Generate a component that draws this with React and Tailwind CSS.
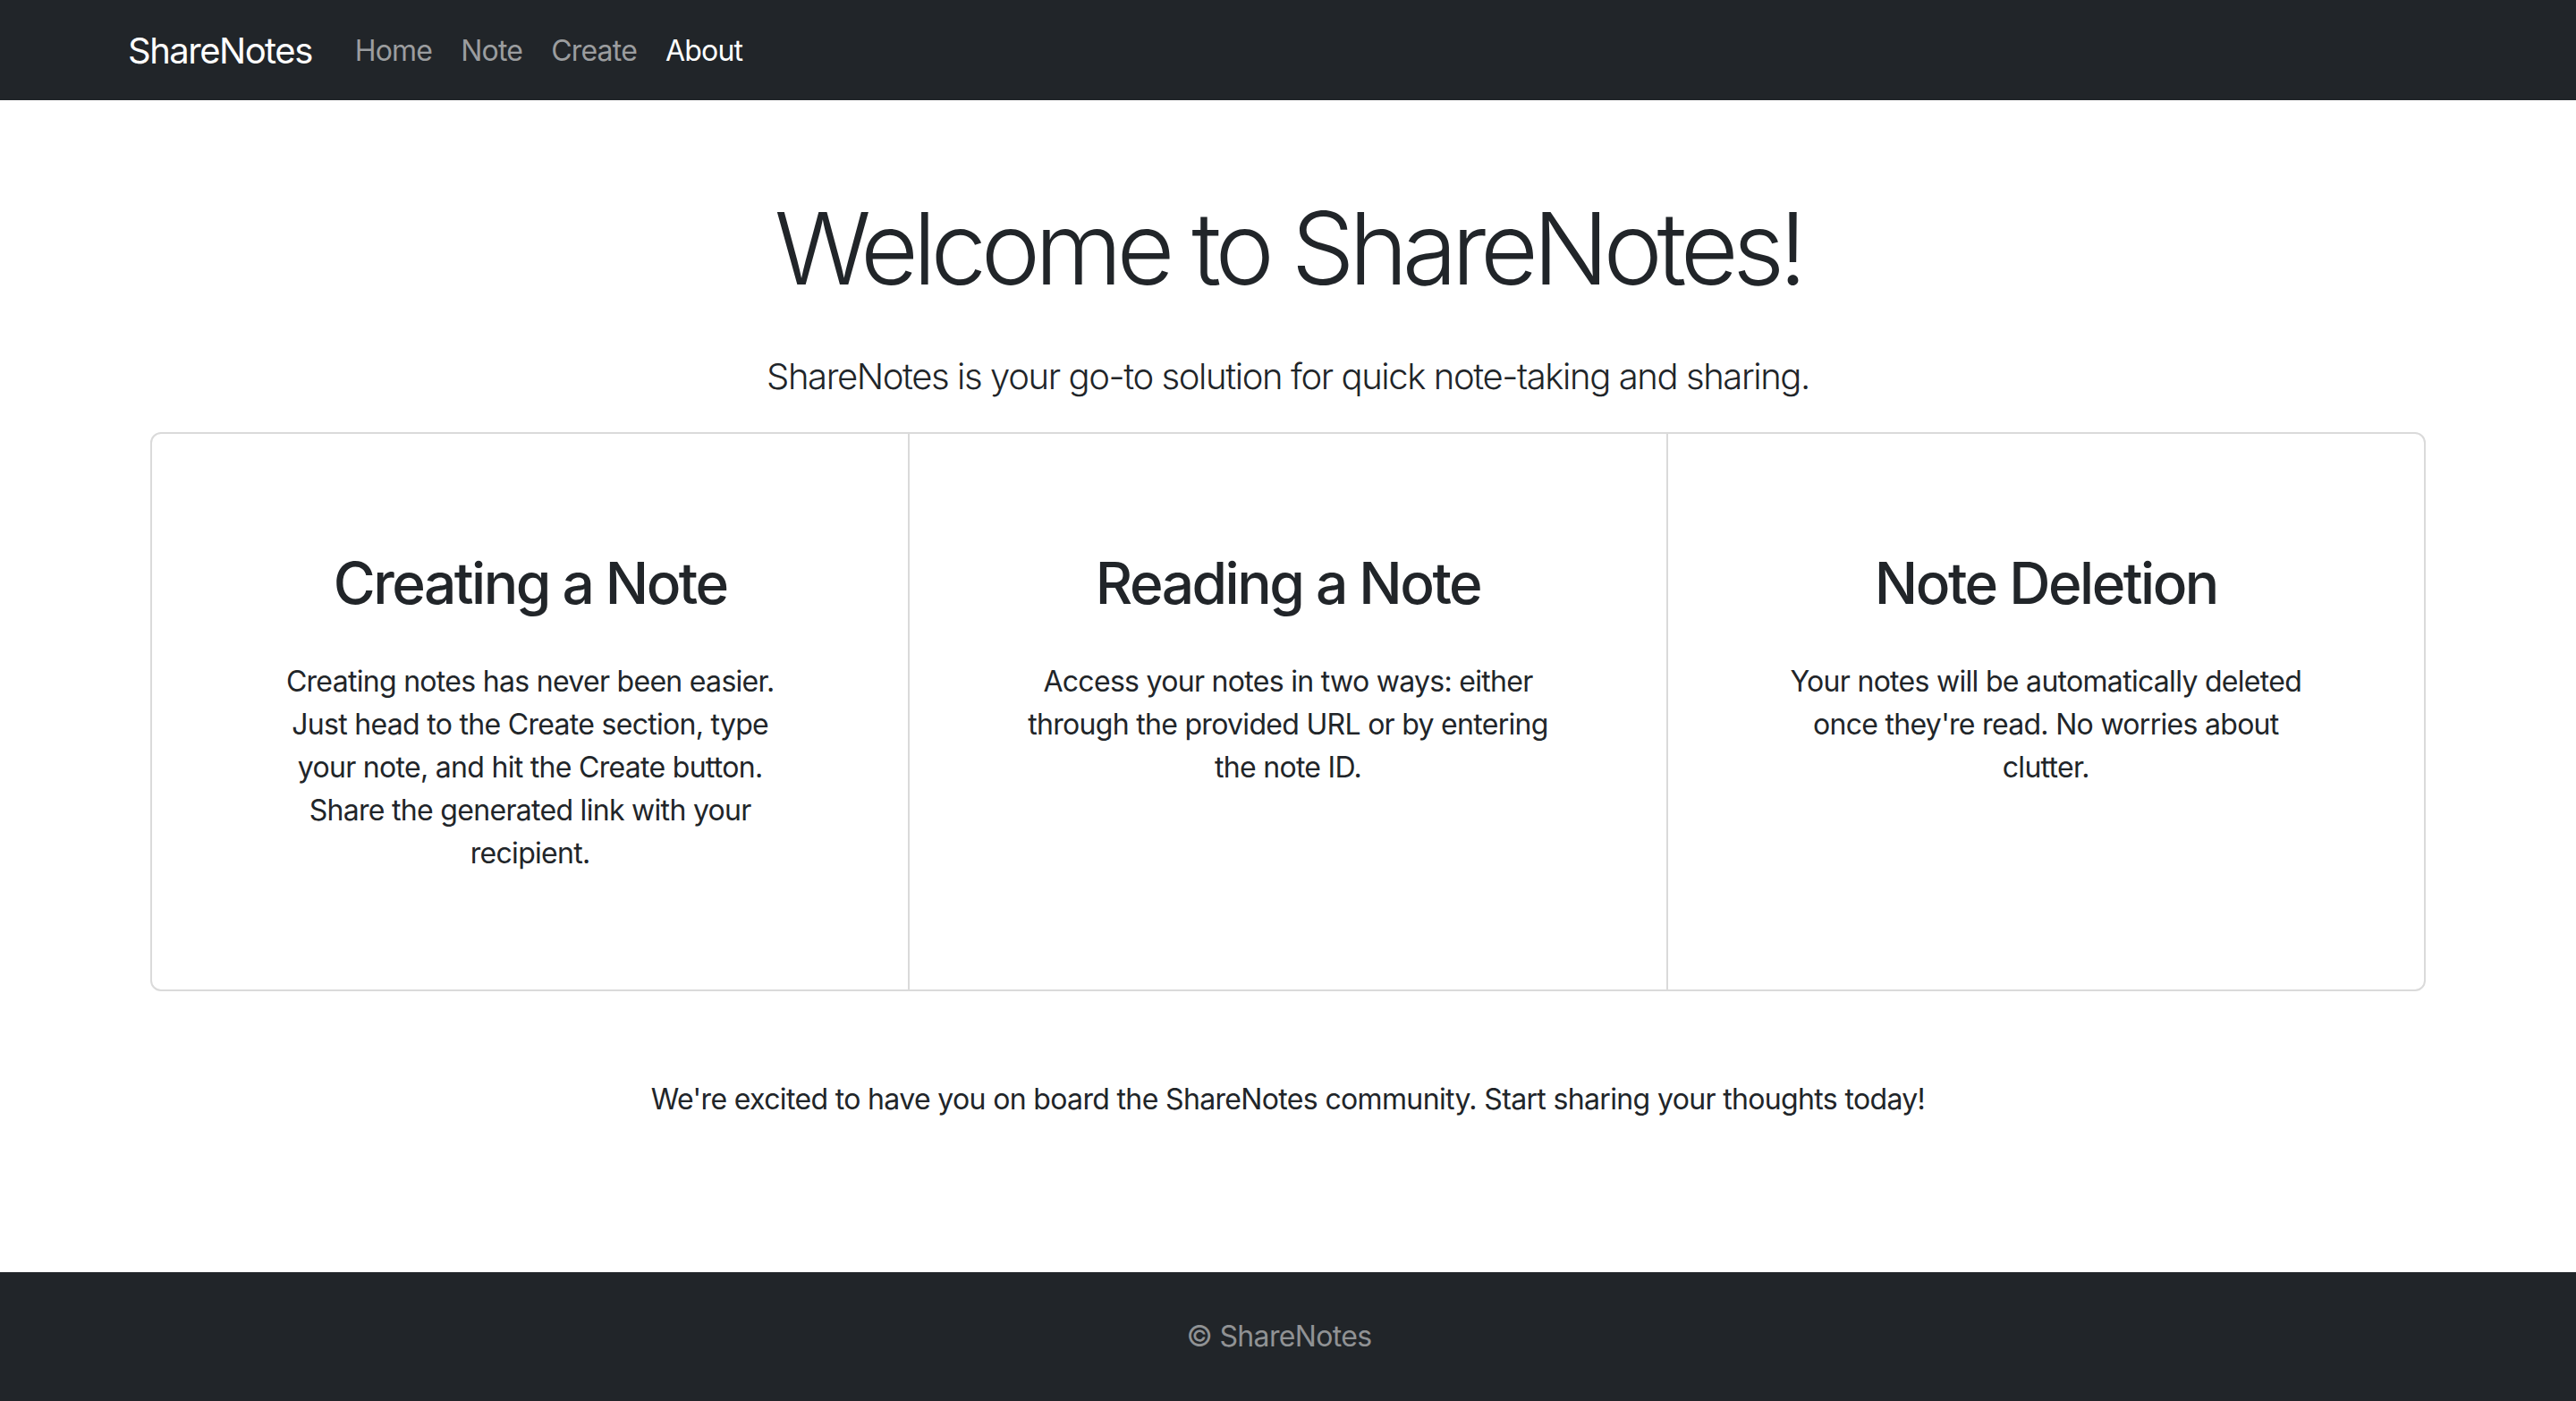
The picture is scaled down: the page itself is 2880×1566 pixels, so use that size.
import React from 'react';

const navLinks = [
  { label: 'Home', active: false },
  { label: 'Note', active: false },
  { label: 'Create', active: false },
  { label: 'About', active: true },
];

const cards = [
  {
    title: 'Creating a Note',
    lines: [
      'Creating notes has never been easier.',
      'Just head to the Create section, type',
      'your note, and hit the Create button.',
      'Share the generated link with your',
      'recipient.',
    ],
  },
  {
    title: 'Reading a Note',
    lines: [
      'Access your notes in two ways: either',
      'through the provided URL or by entering',
      'the note ID.',
    ],
  },
  {
    title: 'Note Deletion',
    lines: [
      'Your notes will be automatically deleted',
      "once they're read. No worries about",
      'clutter.',
    ],
  },
];

const Navbar = () => (
  <nav className="bg-[#212529] h-[112px] flex items-center">
    <div className="w-full px-[143px] flex items-center pt-[2px]">
      <a className="text-white text-[40px] leading-[60px] mr-[32px] tracking-[-1.5px]">ShareNotes</a>
      <div className="flex items-center">
        {navLinks.map((link) => (
          <a
            key={link.label}
            className={`text-[32px] leading-[48px] px-[16px] tracking-[-0.8px] ${link.active ? 'text-white' : 'text-[#9b9d9f]'}`}
          >
            {link.label}
          </a>
        ))}
      </div>
    </div>
  </nav>
);

const Card = ({ title, lines, last }) => (
  <div className={`flex-1 p-[128px] px-[64px] text-center ${last ? '' : 'border-r-2 border-[#dadada]'}`}>
    <h2 className="text-[64px] leading-[77px] font-medium mb-[48px] tracking-[-2.5px]">{title}</h2>
    <p className="text-[32px] leading-[48px] tracking-[-0.7px]">
      {lines.map((line, i) => (
        <React.Fragment key={i}>
          {line}
          {i < lines.length - 1 && <br />}
        </React.Fragment>
      ))}
    </p>
  </div>
);

export default function App() {
  return (
    <div
      className="min-h-screen flex flex-col bg-white text-[#212529]"
      style={{ fontFamily: 'Inter, "Noto Sans", sans-serif' }}
    >
      <Navbar />

      <main className="flex flex-col items-center">
        <h1 className="mt-[98px] text-[112px] leading-[134px] font-light tracking-[-6.3px] mb-[47px]">
          Welcome to ShareNotes!
        </h1>
        <p className="text-[40px] leading-[60px] font-light mb-[32px] tracking-[-1.4px]">
          ShareNotes is your go-to solution for quick note-taking and sharing.
        </p>

        <div className="w-[2544px] flex border-2 border-[#dadada] rounded-[12px]">
          {cards.map((card, i) => (
            <Card key={card.title} {...card} last={i === cards.length - 1} />
          ))}
        </div>

        <p className="mt-[97px] text-[32px] leading-[48px] tracking-[-0.65px]">
          We're excited to have you on board the ShareNotes community. Start sharing your thoughts today!
        </p>
      </main>

      <footer className="mt-auto bg-[#212529] h-[144px] flex items-center justify-center">
        <span className="text-[32px] leading-[48px] text-[#909294] tracking-[-0.65px] pr-[20px]">© ShareNotes</span>
      </footer>
    </div>
  );
}
